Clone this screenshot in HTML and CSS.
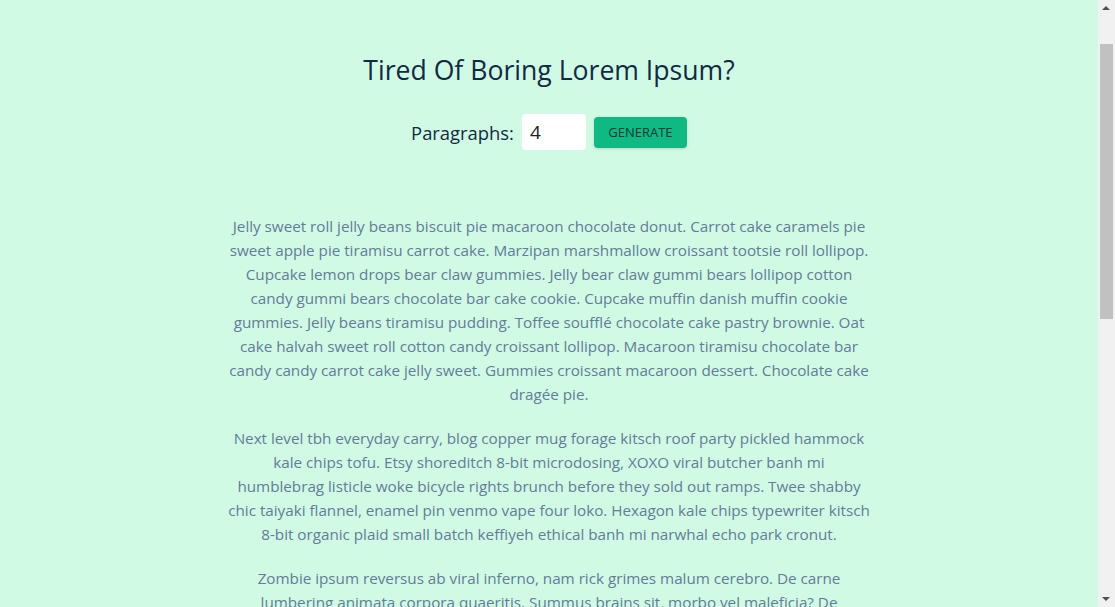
FILE: index.html
```html
<!DOCTYPE html>
<html lang="en">
<head>
<meta charset="utf-8">
<title>Lorem Ipsum Generator</title>
<link rel="stylesheet" href="styles.css">
</head>
<body>
<main class="page">
  <section class="section-center">
    <h3 class="title">Tired Of Boring Lorem Ipsum?</h3>
    <form class="lorem-form">
      <label class="label" for="amount">Paragraphs:</label>
      <input class="amount" type="number" id="amount" value="4">
      <button class="btn" type="submit">Generate</button>
    </form>
    <article class="result">
      <p class="para">Jelly sweet roll jelly beans biscuit pie macaroon chocolate donut. Carrot cake caramels pie sweet apple pie tiramisu carrot cake. Marzipan marshmallow croissant tootsie roll lollipop. Cupcake lemon drops bear claw gummies. Jelly bear claw gummi bears lollipop cotton candy gummi bears chocolate bar cake cookie. Cupcake muffin danish muffin cookie gummies. Jelly beans tiramisu pudding. Toffee soufflé chocolate cake pastry brownie. Oat cake halvah sweet roll cotton candy croissant lollipop. Macaroon tiramisu chocolate bar candy candy carrot cake jelly sweet. Gummies croissant macaroon dessert. Chocolate cake dragée pie.</p>
      <p class="para">Next level tbh everyday carry, blog copper mug forage kitsch roof party pickled hammock kale chips tofu. Etsy shoreditch 8-bit microdosing, XOXO viral butcher banh mi humblebrag listicle woke bicycle rights brunch before they sold out ramps. Twee shabby chic taiyaki flannel, enamel pin venmo vape four loko. Hexagon kale chips typewriter kitsch 8-bit organic plaid small batch keffiyeh ethical banh mi narwhal echo park cronut.</p>
      <p class="para">Zombie ipsum reversus ab viral inferno, nam rick grimes malum cerebro. De carne lumbering animata corpora quaeritis. Summus brains sit, morbo vel maleficia? De apocalypsi gorger omero undead survivor dictum mauris. Hi mindless mortuis soulless creaturas, imo evil stalking monstra adventus resi dentevil vultus comedat cerebella viventium. Qui animated corpse, cricket bat max brucks terribilem incessu zomby.</p>
      <p class="para">Cat ipsum dolor sit amet, hunt anything that moves lick sellotape but slap owner's face at 5am until human fills food dish. Chase mice attack the dog then pretend like nothing happened. Sleep on keyboard sit in box, knock dish off table head butt cant eat out of my own dish.</p>
    </article>
  </section>
</main>
<div class="scrollbar" aria-hidden="true">
  <span class="arrow arrow-up"></span>
  <span class="thumb"></span>
  <span class="arrow arrow-down"></span>
</div>
</body>
</html>
```

FILE: styles.css
```css
* {
  box-sizing: border-box;
}

html, body {
  margin: 0;
  padding: 0;
}

body {
  background: #d1fae5;
  font-family: "Open Sans", "Lato", sans-serif;
  color: #102a42;
}

.page {
  margin-right: 17px;
}

.section-center {
  width: 641.875px;
  margin: 0 auto;
  padding-top: 52px;
  text-align: center;
}

.title {
  margin: 0;
  font-size: 26.6px;
  line-height: 36px;
  font-weight: 400;
  color: #102a42;
}

.lorem-form {
  margin: 26px 0 64px;
  display: flex;
  justify-content: center;
  align-items: center;
}

.label {
  font-size: 18.4px;
  color: #102a42;
}

.amount {
  width: 64px;
  height: 36px;
  margin: 0 8px;
  padding: 4px 8px;
  border: none;
  border-radius: 4px;
  background: #fff;
  font-family: inherit;
  font-size: 19px;
  color: #222;
  -moz-appearance: textfield;
}

.amount::-webkit-inner-spin-button,
.amount::-webkit-outer-spin-button {
  -webkit-appearance: none;
  margin: 0;
}

.btn {
  height: 31px;
  width: 93px;
  padding: 0;
  background: #10b981;
  border: none;
  border-radius: 4px;
  box-shadow: 0 1px 3px rgba(0, 0, 0, 0.15);
  color: #0f3a3a;
  font-family: inherit;
  font-size: 13px;
  text-transform: uppercase;
  cursor: pointer;
}

.result {
  margin-bottom: 32px;
}

.para {
  margin: 0 0 20px;
  font-size: 15.25px;
  line-height: 24px;
  letter-spacing: -0.02px;
  color: #617d98;
}

.scrollbar {
  position: fixed;
  top: 0;
  right: 0;
  width: 17px;
  height: 100vh;
  background: #f1f1f1;
}

.thumb {
  position: absolute;
  left: 2px;
  top: 44px;
  width: 13px;
  height: 275px;
  background: #c1c1c1;
}

.arrow {
  position: absolute;
  left: 4px;
  width: 0;
  height: 0;
  border-left: 4px solid transparent;
  border-right: 4px solid transparent;
}

.arrow-up {
  top: 6px;
  border-bottom: 4px solid #505050;
}

.arrow-down {
  bottom: 6px;
  border-top: 4px solid #505050;
}
```
